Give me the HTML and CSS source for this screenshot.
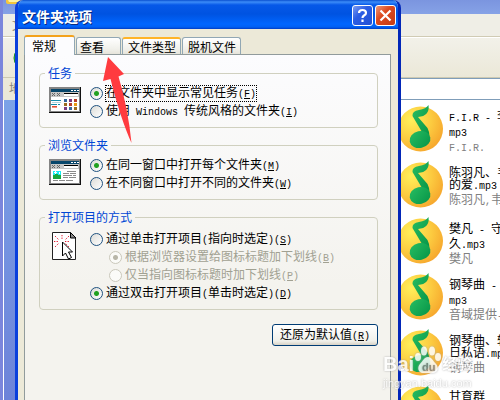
FILE: index.html
```html
<!DOCTYPE html>
<html lang="zh-CN">
<head>
    <meta charset="UTF-8">
    <meta name="viewport" content="width=device-width, initial-scale=1.0">
    <title>文件夹选项</title>
    <link rel="stylesheet" href="styles.css">
</head>
<body>
    <!-- Shared symbols -->
    <svg class="symbols" aria-hidden="true">
        <defs>
            <radialGradient id="disc" cx="0.3" cy="0.3" r="0.8">
                <stop offset="0" stop-color="#fff05a"/>
                <stop offset="0.55" stop-color="#fccb40"/>
                <stop offset="1" stop-color="#f6a52c"/>
            </radialGradient>
            <linearGradient id="green" x1="0" y1="0" x2="1" y2="1">
                <stop offset="0" stop-color="#27bd62"/>
                <stop offset="1" stop-color="#079447"/>
            </linearGradient>
        </defs>
        <symbol id="note" viewBox="0 0 46 48">
            <circle cx="20.500" cy="25" r="22.500" fill="url(#disc)"/>
            <path d="M28.500 1 Q26 5 19 6 Q12 7 12.500 12 L22 28 L29.500 32 Q29.500 28 27.500 24 L18 13 Q30 12 28.500 1z" fill="url(#green)"/>
            <ellipse cx="20" cy="35.500" rx="10.500" ry="8.500" transform="rotate(-12 20 35.500)" fill="url(#green)"/>
        </symbol>
    </svg>

    <div class="explorer">
        <header class="explorer-title">
            <svg class="folder" width="17" height="5" viewBox="0 0 17 5"><path d="M0 0h17v1l-4 3H3Q0 4 0 2z" fill="#f5c63c"/><path d="M2 0h13l-3 2H3z" fill="#fff2a0"/></svg>
        </header>
        <div class="menubar">文件</div>
        <div class="toolbar">
            <svg width="26" height="26" viewBox="0 0 26 26"><circle cx="13" cy="13" r="11" fill="#3db43a" stroke="#1d8a25"/></svg>
        </div>
        <div class="address"><span class="address-label">地址</span><span class="address-box"></span></div>
        <div class="explorer-body">
            <aside class="sidebar"></aside>
            <ul class="files">
                <li><svg class="note"><use href="#note"/></svg><p><i>F.I.R - </i>李<br><i>mp3</i><br><span class="artist"><i>F.I.R.</i></span></p></li>
                <li><svg class="note"><use href="#note"/></svg><p>陈羽凡、韦<br>的爱<i>.mp3</i><br><span class="artist">陈羽凡<i>,</i>韦</span></p></li>
                <li><svg class="note"><use href="#note"/></svg><p>樊凡<i> - </i>守<br>久<i>.mp3</i><br><span class="artist">樊凡</span></p></li>
                <li><svg class="note"><use href="#note"/></svg><p>钢琴曲<i> - </i><br><i>mp3</i><br><span class="artist">音域提供<i>-</i></span></p></li>
                <li><svg class="note"><use href="#note"/></svg><p>钢琴曲、轻<br>日私语<i>.mp3</i><br><span class="artist">钢琴曲</span></p></li>
                <li><svg class="note"><use href="#note"/></svg><p>甘育群</p></li>
            </ul>
        </div>
    </div>

    <section class="dialog" role="dialog" aria-labelledby="dialog-title">
        <header class="dialog-title">
            <h1 id="dialog-title">文件夹选项</h1>
            <button class="caption-btn help" type="button" aria-label="帮助">
                <svg width="19" height="19" viewBox="0 0 19 19" fill="none" stroke="#fff" stroke-width="2.200"><path d="M6 7Q6 4 9.500 4T13 7Q13 8.500 11 9.500Q9.500 10.500 9.500 12"/><path d="M9.500 13.500v2.500"/></svg>
            </button>
            <button class="caption-btn close" type="button" aria-label="关闭">
                <svg width="19" height="19" viewBox="0 0 19 19" stroke="#fff" stroke-width="2.200"><path d="M4.500 4.500l10 10M14.500 4.500l-10 10"/></svg>
            </button>
        </header>

        <div class="dialog-body">
            <div class="tabs" role="tablist">
                <button class="tab active" type="button" role="tab" aria-selected="true">常规</button>
                <button class="tab" type="button" role="tab">查看</button>
                <button class="tab hot" type="button" role="tab">文件类型</button>
                <button class="tab" type="button" role="tab">脱机文件</button>
            </div>

            <form class="pane">
                <fieldset>
                    <legend>任务</legend>
                    <div class="group">
                        <svg class="group-icon" width="32" height="27" viewBox="0 0 32 27" shape-rendering="crispEdges">
                            <path d="M0 0h32v26H0z" fill="#111"/><path d="M0 0h31v25H0z" fill="#848484"/><path d="M2 2h28v22H2z" fill="#fff"/>
                            <path d="M2 2h28v3H2z" fill="#08466b"/><path d="M22 3h2v1h-2zM25 3h2v1h-2zM28 3h2v1h-2z" fill="#fff"/>
                            <path d="M2 5h28v5H2z" fill="#c6c6c6"/><path d="M3 6h1v1h-1zM5 6h1v1h-1zM4 7h1v1h-1zM3 8h1v1h-1zM5 8h1v1h-1zM8 6h1v1h-1zM10 6h1v1h-1zM9 7h1v1h-1zM8 8h1v1h-1zM10 8h1v1h-1z" fill="#666"/>
                            <path d="M15 6h14v1H15z" fill="#000"/><path d="M15 7h14v2H15z" fill="#fff"/>
                            <path d="M2 13h10v1H2zM2 17h6v1H2zM9 17h2v1H9z" fill="#168baa"/><path d="M3 19h5v1H3z" fill="#e34b32"/><path d="M3 20h5v1H3z" fill="#ef9682"/><path d="M3 15h9v1H3z" fill="#b2d6df"/>
                            <path d="M15 12h3v3h-3zM20 20h3v3h-3z" fill="#37689b"/><path d="M20 12h3v3h-3zM15 20h3v3h-3z" fill="#7b3c80"/><path d="M25 12h3v3h-3zM20 16h3v3h-3z" fill="#b63d29"/><path d="M15 16h3v3h-3zM25 20h3v3h-3z" fill="#9a6b20"/><path d="M25 16h3v3h-3z" fill="#e69b13"/>
                        </svg>
                        <div class="options">
                            <label><input type="radio" name="task" checked><span class="focused">在文件夹中显示常见任务<i>(<u>F</u>)</i></span></label>
                            <label><input type="radio" name="task"><span>使用<i> Windows </i>传统风格的文件夹<i>(<u>I</u>)</i></span></label>
                        </div>
                    </div>
                </fieldset>

                <fieldset>
                    <legend>浏览文件夹</legend>
                    <div class="group">
                        <svg class="group-icon" width="32" height="27" viewBox="0 0 32 27" shape-rendering="crispEdges">
                            <path d="M0 0h32v26H0z" fill="#111"/><path d="M0 0h31v25H0z" fill="#848484"/><path d="M2 2h28v22H2z" fill="#fff"/>
                            <path d="M2 2h28v3H2z" fill="#08466b"/><path d="M22 3h2v1h-2zM25 3h2v1h-2zM28 3h2v1h-2z" fill="#fff"/>
                            <path d="M2 5h28v5H2z" fill="#c6c6c6"/><path d="M3 6h1v1h-1zM5 6h1v1h-1zM4 7h1v1h-1zM3 8h1v1h-1zM5 8h1v1h-1zM8 6h1v1h-1zM10 6h1v1h-1zM9 7h1v1h-1zM8 8h1v1h-1zM10 8h1v1h-1z" fill="#666"/>
                            <path d="M15 6h14v1H15z" fill="#000"/><path d="M15 7h14v2H15z" fill="#fff"/>
                            <path d="M4 12h8v5H4z" fill="#19eaf5"/><path d="M4 16h2v-1h3v1h3v4H4z" fill="#15a83d"/><path d="M6 12h1v3H6zM5 13h3v1H5zM10 13h1v2h-1z" fill="#fff"/>
                            <path d="M18 12h9v1h-9zM14 14h6v1h-6zM21 14h6v1h-6zM14 16h9v1h-9zM24 16h3v1h-3zM14 18h5v1h-5zM20 18h7v1h-7zM4 21h5v1H4zM10 21h6v1h-6zM17 21h7v1h-7z" fill="#8a8a8a"/>
                        </svg>
                        <div class="options">
                            <label><input type="radio" name="browse" checked><span>在同一窗口中打开每个文件夹<i>(<u>M</u>)</i></span></label>
                            <label><input type="radio" name="browse"><span>在不同窗口中打开不同的文件夹<i>(<u>W</u>)</i></span></label>
                        </div>
                    </div>
                </fieldset>

                <fieldset class="roomy">
                    <legend>打开项目的方式</legend>
                    <div class="group">
                        <svg class="group-icon page" width="32" height="29" viewBox="0 0 32 29">
                            <path d="M3.500 .5h18l5 5v22h-23z" fill="#fff" stroke="#222"/><path d="M21.500 .5v5.500h5.500z" fill="#888" stroke="#000"/>
                            <path d="M13 3v4M6 4l4 4M20 4l-4 4M5 9.500h5M16 9.500h5M6 15l4-4M20 15l-4-4" stroke="#e21b31" stroke-dasharray="1.300 1.300"/>
                            <path d="M13.500 10v14l3-3 3 6 3-1.500-3-5.500h4z" fill="#fff" stroke="#000"/>
                        </svg>
                        <div class="options">
                            <label><input type="radio" name="click"><span>通过单击打开项目<i>(</i>指向时选定<i>)(<u>S</u>)</i></span></label>
                            <label class="sub"><input type="radio" name="underline" checked disabled><span>根据浏览器设置给图标标题加下划线<i>(<u>B</u>)</i></span></label>
                            <label class="sub"><input type="radio" name="underline" disabled><span>仅当指向图标标题时加下划线<i>(<u>P</u>)</i></span></label>
                            <label><input type="radio" name="click" checked><span>通过双击打开项目<i>(</i>单击时选定<i>)(<u>D</u>)</i></span></label>
                        </div>
                    </div>
                </fieldset>

                <button class="restore" type="button">还原为默认值<i>(<u>R</u>)</i></button>
            </form>
        </div>
    </section>

    <svg class="arrow" width="32" height="88" viewBox="0 0 32 88" aria-hidden="true">
        <path d="M8 1L24 18L18.500 20.500Q28 52 31.500 87Q21 64 10.500 23L3 25z" fill="#ff3b3f"/>
    </svg>

    <div class="watermark">
        <div class="logo">
            <span>Bai</span>
            <svg width="28" height="28" viewBox="0 0 28 28" fill="#fff">
                <ellipse cx="4" cy="11" rx="3" ry="4"/><ellipse cx="10" cy="5" rx="3" ry="4.500"/><ellipse cx="18" cy="5" rx="3" ry="4.500"/><ellipse cx="24" cy="11" rx="3" ry="4"/>
                <path d="M14 11c-4 0-5 4-8 7s-2 9 3 9h10c5 0 6-6 3-9s-4-7-8-7z"/>
                <text x="8" y="25" class="du">du</text>
            </svg>
            <span class="jingyan">经验</span>
        </div>
        <div class="site">jingyan.baidu.com</div>
    </div>
</body>
</html>
```

FILE: styles.css
```css
* {
    box-sizing: border-box;
}

body {
    margin: 0;
    height: 100vh;
    overflow: hidden;
    position: relative;
    background: #fff;
    color: #000;
    font: 12px/12px "Noto Sans CJK SC", sans-serif;
}

button, input {
    font: inherit;
    margin: 0;
    padding: 0;
}

/* half-width characters, 6px each */
i {
    font: 10px/12px "Liberation Mono", monospace;
    white-space: pre;
}

.symbols {
    position: absolute;
    width: 0;
    height: 0;
}

/* Explorer window behind */
.explorer {
    height: 100%;
    display: flex;
    flex-direction: column;
    border-left: 3px solid #7b86dc;
}

.explorer-title {
    height: 14px;
    flex: none;
    padding-left: 3px;
    background: linear-gradient(#7b95df, #86a2e6);
}

.folder {
    display: block;
}

.menubar {
    height: 23px;
    flex: none;
    padding: 5px 9px;
    background: #efeee6;
    border-bottom: 1px solid #d0cbb4;
    color: #8b8878;
}

.toolbar {
    height: 41px;
    flex: none;
    padding: 7px 9px;
    background: linear-gradient(#f2f1e9, #ebe8d8);
    border-top: 1px solid #fff;
    border-bottom: 1px solid #cdc9b2;
}

.address {
    height: 22px;
    flex: none;
    display: flex;
    background: #ece9d8;
}

.address-label {
    padding: 4px 6px;
    color: #8b8878;
}

.address-box {
    flex: 1;
    background: #fff;
    border: 1px solid #7f9db9;
    border-right: 0;
}

.explorer-body {
    flex: 1;
    min-height: 0;
    display: flex;
}

.sidebar {
    flex: 0 0 397px;
    border-left: 1px solid #fff;
    background: linear-gradient(#7ba2e7, #6d83d9);
}

.files {
    flex: 1;
    min-width: 0;
    margin: 0;
    padding: 4px 0 0;
    list-style: none;
    overflow: hidden;
}

.files li {
    height: 56px;
    display: flex;
    gap: 3px;
}

.note {
    flex: none;
    width: 46px;
    height: 48px;
}

.files p {
    margin: 0;
    padding-top: 6px;
    white-space: nowrap;
}

.artist {
    color: #808080;
}

/* Dialog */
.dialog {
    position: absolute;
    top: 0;
    bottom: 0;
    left: 15px;
    width: 386px;
    display: flex;
    flex-direction: column;
    overflow: hidden;
    border: 3px solid #0a3fdc;
    border-width: 0 3px;
    border-right-color: #0227b8;
    border-radius: 8px 8px 0 0;
    background: #ece9d8;
}

.dialog-title {
    height: 29px;
    flex: none;
    display: flex;
    align-items: center;
    gap: 2px;
    margin: 0 -3px;
    padding: 2px 5px 0 7px;
    background: linear-gradient(#0a50d0, #3c8cf8 2px, #0658e8 5px, #0053e1 14px, #0066ff 24px, #0060f4 27px, #003cc4);
}

.dialog-title h1 {
    flex: 1;
    margin: 0;
    color: #fff;
    font-size: 14px;
    line-height: 14px;
    font-weight: 700;
    text-shadow: 1px 1px 0 #0a2a80;
}

.caption-btn {
    width: 21px;
    height: 21px;
    border: 1px solid #fff;
    border-radius: 3px;
    background: linear-gradient(135deg, #7d9cf2, #2c5ee4 40%, #2250d4);
}

.caption-btn svg {
    display: block;
}

.close {
    background: linear-gradient(135deg, #ee9878, #dd4a20 40%, #c43a14);
}

.dialog-body {
    flex: 1;
    min-height: 0;
    display: flex;
    flex-direction: column;
    padding: 0 7px 0 6px;
}

.tabs {
    height: 25px;
    flex: none;
    display: flex;
    align-items: flex-end;
    gap: 1px;
}

.tab {
    height: 17px;
    padding: 0 4px 0 5px;
    border: 1px solid #91a7b4;
    border-bottom: 0;
    border-radius: 3px 3px 0 0;
    background: linear-gradient(#fff, #f0f0ea 70%, #e6e4da);
    line-height: 18px;
}

.tab:nth-child(2) {
    padding-left: 3px;
    padding-right: 16px;
}

.tab.hot {
    border-top: 2px solid #ffb428;
    line-height: 16px;
}

.tab.active {
    z-index: 1;
    height: 20px;
    margin-bottom: -1px;
    padding: 0 18px 0 7px;
    border-top: 2px solid #f3a21c;
    background: #fcfcfe;
    line-height: 16px;
}

.pane {
    flex: 1;
    display: flex;
    flex-direction: column;
    gap: 10px;
    padding: 11px 12px 0 14px;
    border: 1px solid #919b9c;
    border-bottom: 0;
    background: linear-gradient(#fcfcfe, #f4f3ee 230px);
}

fieldset {
    min-width: 0;
    margin: 0;
    padding: 4px 8px 7px 9px;
    border: 1px solid #d0d0bf;
    border-radius: 4px;
}

fieldset.roomy {
    padding-top: 6px;
}

legend {
    margin-left: -4px;
    padding: 0 3px;
    color: #0046d5;
    line-height: 14px;
}

.group {
    display: flex;
    gap: 9px;
}

.group-icon {
    flex: none;
    margin-top: 3px;
}

.group-icon.page {
    margin-top: 2px;
}

.options label {
    height: 18px;
    display: flex;
    align-items: center;
    gap: 3px;
    white-space: nowrap;
}

.options .sub {
    padding-left: 19px;
    color: #a1a192;
}

.options .focused {
    outline: 1px dotted #000;
}

input[type="radio"] {
    appearance: none;
    flex: none;
    width: 13px;
    height: 13px;
    border: 1px solid #1f5280;
    border-radius: 50%;
    background: linear-gradient(135deg, #dcdcd7, #fff);
}

input[type="radio"]:checked {
    background: radial-gradient(circle, #21a121 0 2px, transparent 3px), linear-gradient(135deg, #dcdcd7, #fff);
}

input[type="radio"]:disabled {
    border-color: #cac8bb;
    background: #fbfbf8;
}

input[type="radio"]:disabled:checked {
    background: radial-gradient(circle, #b8b6a8 0 2px, #fbfbf8 3px);
}

u {
    text-underline-offset: 1px;
}

.restore {
    align-self: flex-end;
    height: 22px;
    margin-top: 4px;
    padding: 0 7px;
    border: 1px solid #003c74;
    border-radius: 3px;
    background: linear-gradient(#fff, #f0f0ea 80%, #d8d2c6);
}

/* Annotations on top */
.arrow {
    position: absolute;
    left: 100px;
    top: 56px;
}

.watermark {
    position: absolute;
    left: 383px;
    top: 346px;
    color: #fff;
    opacity: 0.85;
    font-family: "Liberation Sans", "Noto Sans CJK SC", sans-serif;
    text-shadow: 0 0 2px #999;
}

.logo {
    display: flex;
    align-items: flex-end;
    font-size: 20px;
    line-height: 20px;
    font-weight: 700;
}

.logo svg {
    filter: drop-shadow(0 0 1px #aaa);
}

.du {
    fill: #888;
    font-size: 11px;
}

.jingyan {
    font-size: 15px;
}

.site {
    margin-top: 3px;
    font-size: 11px;
}
```
